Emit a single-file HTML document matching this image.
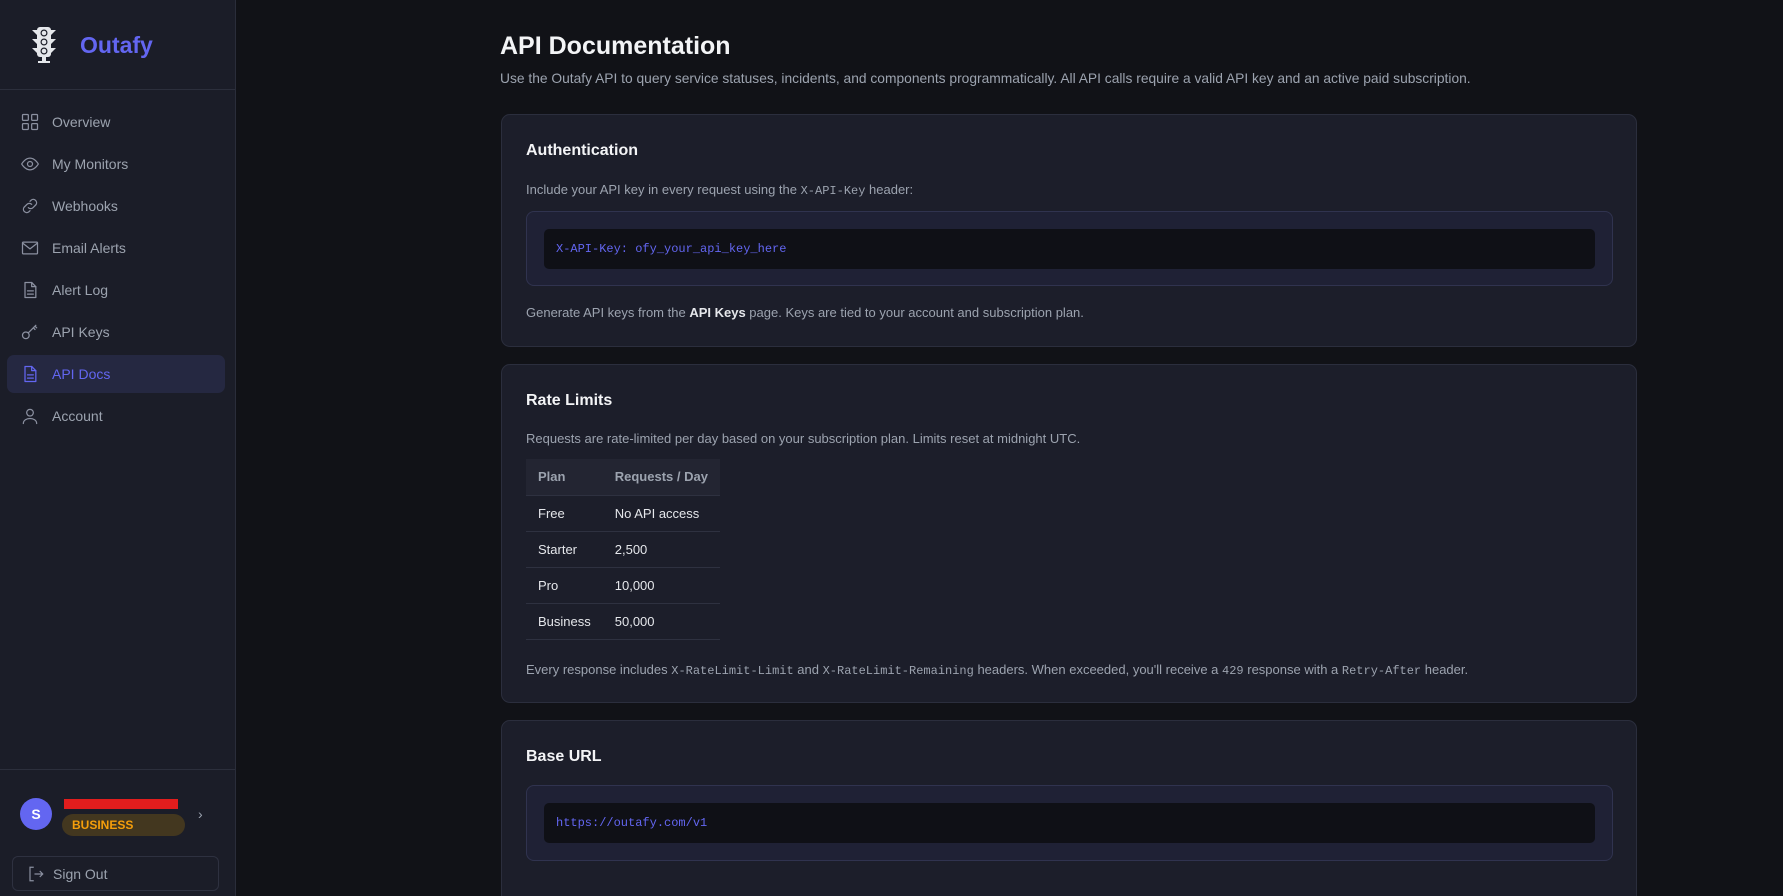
<!DOCTYPE html>
<html><head><style>
*{box-sizing:border-box;margin:0;padding:0}
html{width:1783px;height:896px;overflow:hidden}
body{width:1783px;height:896px;overflow:hidden;background:#111217;font-family:"Liberation Sans",sans-serif;position:relative;color:#e5e7eb}
.sb{position:absolute;left:0;top:0;width:236px;height:896px;background:#1b1d28;border-right:1px solid #2a2d3a}
.logo{position:absolute;left:80px;top:32px;font-size:23px;font-weight:bold;color:#6366f1}
.hr{position:absolute;left:0;width:235px;height:1px;background:#2c2f3c}
.nav{position:absolute;left:20px;font-size:14px;color:#9ca3af;display:flex;align-items:center;height:20px}
.nav svg{width:20px;height:20px;margin-right:12px;fill:none;stroke:#8b90a0;stroke-width:1.5;stroke-linecap:round;stroke-linejoin:round}
.act{position:absolute;left:7px;top:355px;width:218px;height:38px;background:#252841;border-radius:7px}
.t{position:absolute;white-space:nowrap}
.card{position:absolute;left:501px;width:1136px;background:#1c1e2a;border:1px solid #2b2e3d;border-radius:9px}
.h{position:absolute;left:24px;font-size:16px;font-weight:bold;color:#f3f4f6}
.p{position:absolute;left:24px;font-size:13px;color:#9ca3af;white-space:nowrap}
code{font-family:"Liberation Mono",monospace;font-size:12px}
.co{position:absolute;left:24px;width:1087px;background:#1f2135;border:1px solid #30334f;border-radius:8px}
.ci{position:absolute;left:17px;top:17px;width:1051px;height:40px;background:#0f1016;border-radius:5px;color:#6366f1;font-family:"Liberation Mono",monospace;font-size:12px;padding:13px 12px}
table{position:absolute;left:24px;top:94px;border-collapse:collapse;font-size:13px;width:185px;white-space:nowrap}
td,th{text-align:left;padding:0 12px;height:36px;border-bottom:1px solid #2e3140;color:#e5e7eb;font-weight:normal}
th{background:#232532;color:#9ca3af;font-weight:bold}
</style></head><body>
<div class="sb">
<svg style="position:absolute;left:31px;top:26px" width="26" height="38" viewBox="0 0 26 38" fill="#e5e7eb"><rect x="6" y="1" width="14" height="30" rx="3"/><circle cx="13" cy="7" r="3.5" fill="#1b1d28"/><circle cx="13" cy="16" r="3.5" fill="#1b1d28"/><circle cx="13" cy="25" r="3.5" fill="#1b1d28"/><circle cx="13" cy="7" r="2.3"/><circle cx="13" cy="16" r="2.3"/><circle cx="13" cy="25" r="2.3"/><path d="M6 4H1l5 5zM6 13H1l5 5zM6 22H1l5 5zM20 4h5l-5 5zM20 13h5l-5 5zM20 22h5l-5 5z"/><rect x="11" y="31" width="4" height="4"/><rect x="7" y="35" width="12" height="2"/></svg>
<div class="logo">Outafy</div>
<div class="hr" style="top:89px"></div>
<div class="act"></div>
<div class="nav" style="top:112px"><svg viewBox="0 0 24 24"><rect x="3" y="3" width="7" height="7" rx="1"/><rect x="14" y="3" width="7" height="7" rx="1"/><rect x="3" y="14" width="7" height="7" rx="1"/><rect x="14" y="14" width="7" height="7" rx="1"/></svg>Overview</div>
<div class="nav" style="top:154px"><svg viewBox="0 0 24 24"><path d="M2 12s4-7 10-7 10 7 10 7-4 7-10 7S2 12 2 12z"/><circle cx="12" cy="12" r="3"/></svg>My Monitors</div>
<div class="nav" style="top:196px"><svg viewBox="0 0 24 24"><path d="M10 14a4 4 0 0 0 5.6 0l3.5-3.5a4 4 0 0 0-5.6-5.6L12 6.4M14 10a4 4 0 0 0-5.6 0l-3.5 3.5a4 4 0 0 0 5.6 5.6l1.5-1.5"/></svg>Webhooks</div>
<div class="nav" style="top:238px"><svg viewBox="0 0 24 24"><rect x="3" y="5" width="18" height="14" rx="1"/><path d="M3 6l9 7 9-7"/></svg>Email Alerts</div>
<div class="nav" style="top:280px"><svg viewBox="0 0 24 24"><path d="M6 3h8l5 5v13H6z"/><path d="M14 3v5h5M9 13h7M9 17h7"/></svg>Alert Log</div>
<div class="nav" style="top:322px"><svg viewBox="0 0 24 24"><circle cx="7" cy="16" r="4"/><path d="M10 13l9-9M16 7l2 2M18 5l2 2"/></svg>API Keys</div>
<div class="nav" style="top:364px;color:#6366f1"><svg viewBox="0 0 24 24" style="stroke:#6366f1"><path d="M6 3h8l5 5v13H6z"/><path d="M14 3v5h5M9 13h7M9 17h7"/></svg>API Docs</div>
<div class="nav" style="top:406px"><svg viewBox="0 0 24 24"><circle cx="12" cy="8" r="4"/><path d="M4 21c0-4 4-6 8-6s8 2 8 6"/></svg>Account</div>
<div class="hr" style="top:769px"></div>
<div style="position:absolute;left:20px;top:798px;width:32px;height:32px;border-radius:50%;background:#6366f1;color:#fff;font-weight:bold;font-size:14px;text-align:center;line-height:32px">S</div>
<div style="position:absolute;left:64px;top:799px;width:114px;height:10px;background:#e11d1d"></div>
<div style="position:absolute;left:62px;top:814px;width:123px;height:22px;border-radius:11px;background:#43371f;color:#f59e0b;font-size:12px;font-weight:bold;padding:4px 10px">BUSINESS</div>
<div style="position:absolute;left:198px;top:806px;color:#9ca3af;font-size:14px">›</div>
<div style="position:absolute;left:12px;top:856px;width:207px;height:35px;border:1px solid #2e3140;border-radius:6px;color:#9ca3af;font-size:14px;display:flex;align-items:center;padding-left:14px"><svg width="18" height="18" viewBox="0 0 24 24" fill="none" stroke="#8b90a0" stroke-width="1.6" style="margin-right:8px"><path d="M9 3H4v18h5M10 12h11M17 8l4 4-4 4"/></svg>Sign Out</div>
</div>

<div class="t" style="left:500px;top:32px;font-size:25px;font-weight:bold;color:#f3f4f6">API Documentation</div>
<div class="t" style="left:500px;top:71px;font-size:13.8px;color:#9ca3af">Use the Outafy API to query service statuses, incidents, and components programmatically. All API calls require a valid API key and an active paid subscription.</div>

<div class="card" style="top:114px;height:233px">
<div class="h" style="top:27px">Authentication</div>
<div class="p" style="top:67px">Include your API key in every request using the <code>X-API-Key</code> header:</div>
<div class="co" style="top:96px;height:75px"><div class="ci">X-API-Key: ofy_your_api_key_here</div></div>
<div class="p" style="top:190px">Generate API keys from the <b style="color:#e5e7eb">API Keys</b> page. Keys are tied to your account and subscription plan.</div>
</div>

<div class="card" style="top:364px;height:339px">
<div class="h" style="top:27px">Rate Limits</div>
<div class="p" style="top:66px">Requests are rate-limited per day based on your subscription plan. Limits reset at midnight UTC.</div>
<table><tr><th>Plan</th><th>Requests / Day</th></tr>
<tr><td>Free</td><td>No API access</td></tr><tr><td>Starter</td><td>2,500</td></tr><tr><td>Pro</td><td>10,000</td></tr><tr><td>Business</td><td>50,000</td></tr></table>
<div class="p" style="top:297px">Every response includes <code>X-RateLimit-Limit</code> and <code>X-RateLimit-Remaining</code> headers. When exceeded, you'll receive a <code>429</code> response with a <code>Retry-After</code> header.</div>
</div>

<div class="card" style="top:720px;height:190px">
<div class="h" style="top:27px">Base URL</div>
<div class="co" style="top:64px;height:76px"><div class="ci">https://outafy.com/v1</div></div>
</div>
</body></html>
